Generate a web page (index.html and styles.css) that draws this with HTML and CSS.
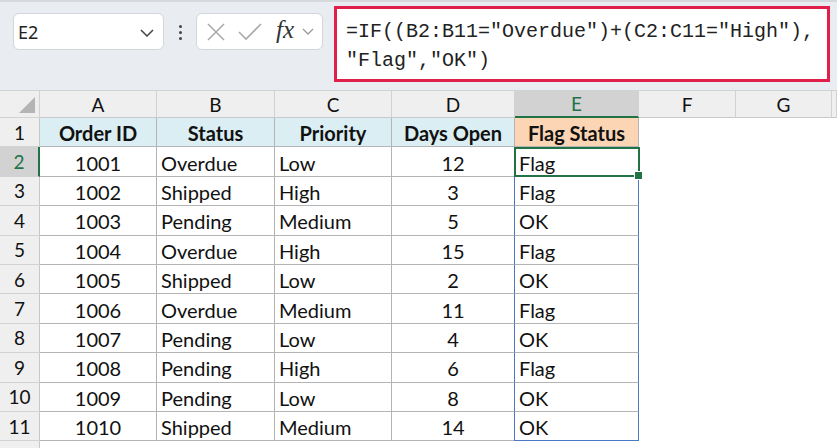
FILE: index.html
```html
<!DOCTYPE html>
<html lang="en">
<head>
    <meta charset="UTF-8">
    <meta name="viewport" content="width=device-width, initial-scale=1.0">
    <title>Flag Status Sheet</title>
    <link rel="stylesheet" href="styles.css">
</head>
<body>
    <div class="toolbar">
        <div class="name-box">
            <span>E2</span>
            <svg class="chev" width="14" height="8" viewBox="0 0 14 8"><path d="M1 1l6 6 6-6" fill="none" stroke="#444" stroke-width="1.5"/></svg>
        </div>
        <div class="dots"><i></i><i></i><i></i></div>
        <div class="fx-box">
            <svg width="20" height="20" viewBox="0 0 20 20"><path d="M2 2l16 16M18 2L2 18" stroke="#aaa" stroke-width="1.6" fill="none"/></svg>
            <svg width="24" height="18" viewBox="0 0 24 18"><path d="M1 9l7 7L23 1" stroke="#aaa" stroke-width="1.6" fill="none"/></svg>
            <span class="fx">fx</span>
            <svg class="chev-sm" width="12" height="7" viewBox="0 0 12 7"><path d="M1 1l5 5 5-5" fill="none" stroke="#999" stroke-width="1.3"/></svg>
        </div>
        <div class="formula-wrap">
            <div class="formula">=IF((B2:B11="Overdue")+(C2:C11="High"),<br>"Flag","OK")</div>
        </div>
    </div>

    <div class="sheet">
        <div class="grid" id="grid">
            <div class="corner"><span></span></div>
            <div class="col-head">A</div>
            <div class="col-head">B</div>
            <div class="col-head">C</div>
            <div class="col-head">D</div>
            <div class="col-head active">E</div>
            <div class="col-head">F</div>
            <div class="col-head">G</div>
            <div class="col-head last"></div>
        </div>
        <div class="selection"><span class="handle"></span></div>
    </div>

    <script>
        const rows = [
            ['1001', 'Overdue', 'Low', '12', 'Flag'],
            ['1002', 'Shipped', 'High', '3', 'Flag'],
            ['1003', 'Pending', 'Medium', '5', 'OK'],
            ['1004', 'Overdue', 'High', '15', 'Flag'],
            ['1005', 'Shipped', 'Low', '2', 'OK'],
            ['1006', 'Overdue', 'Medium', '11', 'Flag'],
            ['1007', 'Pending', 'Low', '4', 'OK'],
            ['1008', 'Pending', 'High', '6', 'Flag'],
            ['1009', 'Pending', 'Low', '8', 'OK'],
            ['1010', 'Shipped', 'Medium', '14', 'OK']
        ];
        const grid = document.getElementById('grid');

        function cell(text, cls) {
            const d = document.createElement('div');
            d.className = cls;
            d.textContent = text;
            grid.appendChild(d);
        }

        // header row
        cell('1', 'row-head');
        ['Order ID', 'Status', 'Priority', 'Days Open'].forEach(t => cell(t, 'cell head'));
        cell('Flag Status', 'cell head orange');
        cell('', 'blank');
        cell('', 'blank');
        cell('', 'blank');

        rows.forEach((r, i) => {
            cell(String(i + 2), i === 0 ? 'row-head active' : 'row-head');
            cell(r[0], 'cell center');
            cell(r[1], 'cell');
            cell(r[2], 'cell');
            cell(r[3], 'cell center');
            cell(r[4], i === rows.length - 1 ? 'cell spill spill-end' : 'cell spill');
            cell('', 'blank');
            cell('', 'blank');
            cell('', 'blank');
        });

        // next row only peeks in at the bottom edge
        cell('', 'row-head');
        for (let i = 0; i < 8; i++) cell('', 'blank');
    </script>
</body>
</html>
```

FILE: styles.css
```css
body {
    margin: 0;
    background: #ffffff;
    width: 837px;
    height: 448px;
    overflow: hidden;
    font-family: 'Lato', 'Noto Sans', sans-serif;
    color: #111;
}

/* formula bar area */
.toolbar {
    height: 90px;
    background: #e9edf1;
    border-top: 2px solid #d6d9dc;
    box-sizing: border-box;
    display: flex;
    align-items: flex-start;
    position: relative;
}

.name-box {
    margin: 11px 0 0 13px;
    width: 151px;
    height: 37px;
    box-sizing: border-box;
    background: #fff;
    border: 1px solid #d3d7db;
    border-radius: 6px;
    display: flex;
    align-items: center;
    justify-content: space-between;
    padding: 0 9px 0 4px;
    font-family: 'Noto Sans', sans-serif;
    font-size: 18px;
    color: #222;
}

.name-box .chev {
    margin-top: 2px;
}

.dots {
    margin: 23px 0 0 12px;
    width: 8px;
    display: flex;
    flex-direction: column;
    align-items: center;
    gap: 3px;
}

.dots i {
    width: 3px;
    height: 3px;
    background: #444;
    border-radius: 50%;
}

.fx-box {
    margin: 11px 0 0 12px;
    width: 127px;
    height: 37px;
    box-sizing: border-box;
    background: #fff;
    border: 1px solid #d3d7db;
    border-radius: 6px;
    display: flex;
    align-items: center;
    gap: 12px;
    padding: 0 0 0 9px;
}

.fx-box .fx {
    font-family: 'Liberation Serif', serif;
    font-style: italic;
    font-size: 25px;
    color: #333;
    margin-left: 2px;
    margin-top: -3px;
}

.fx-box .chev-sm {
    margin-left: -4px;
}

.formula-wrap {
    margin: 4px 0 0 11px;
    width: 496px;
    height: 76px;
    box-sizing: border-box;
    border: 3px solid #e0204a;
    background: #fff;
}

.formula {
    font-family: 'Liberation Mono', monospace;
    font-size: 20px;
    line-height: 29px;
    color: #222;
    padding: 8px 0 0 9px;
    white-space: nowrap;
}

/* sheet grid */
.sheet {
    position: relative;
}

.grid {
    display: grid;
    grid-template-columns: 40px 117px 118px 117px 123px 124px 97px 96px 5px;
    grid-template-rows: 28px repeat(11, 29.4px) 29px;
    font-size: 20px;
}

.corner {
    background: #efefef;
    border-right: 1px solid #d2d2d2;
    border-bottom: 1px solid #d2d2d2;
    border-top: 1px solid #d2d2d2;
    position: relative;
}

.corner span {
    position: absolute;
    right: 4px;
    bottom: 4px;
    width: 0;
    height: 0;
    border-left: 16px solid transparent;
    border-bottom: 16px solid #b4b4b4;
}

.col-head {
    background: #efefef;
    border-right: 1px solid #d2d2d2;
    border-bottom: 1px solid #c8c8c8;
    border-top: 1px solid #d2d2d2;
    display: flex;
    align-items: center;
    justify-content: center;
    color: #111;
    font-size: 19px;
}

.col-head.active {
    background: #d2d2d2;
    color: #217346;
    border-bottom: 2px solid #217346;
}

.row-head {
    background: #efefef;
    border-right: 1px solid #c8c8c8;
    border-bottom: 1px solid #d2d2d2;
    display: flex;
    align-items: center;
    justify-content: center;
    color: #111;
    font-size: 19px;
}

.row-head.active {
    background: #d2d2d2;
    color: #217346;
    border-right: 2px solid #217346;
}

.cell {
    border-right: 1px solid #b4b4b4;
    border-bottom: 1px solid #b4b4b4;
    display: flex;
    align-items: center;
    padding: 2px 4px 0;
    white-space: nowrap;
    overflow: hidden;
}

.cell.head {
    background: #daeef3;
    font-weight: bold;
    justify-content: center;
}

.cell.orange {
    background: #fcd5b4;
}

.cell.center {
    justify-content: center;
}

.cell.spill {
    border-left: 1px solid #4a78c4;
    border-right: 1px solid #4a78c4;
    margin-left: -1px;
}

.cell.spill-end {
    border-bottom: 1px solid #4a78c4;
}

.blank {
    background: #fff;
}

/* active cell E2 */
.selection {
    position: absolute;
    left: 514px;
    top: 57px;
    width: 126px;
    height: 30px;
    box-sizing: border-box;
    border: 2px solid #217346;
    pointer-events: none;
}

.selection .handle {
    position: absolute;
    right: -5px;
    bottom: -5px;
    width: 7px;
    height: 7px;
    background: #217346;
    border: 1px solid #fff;
}
```
